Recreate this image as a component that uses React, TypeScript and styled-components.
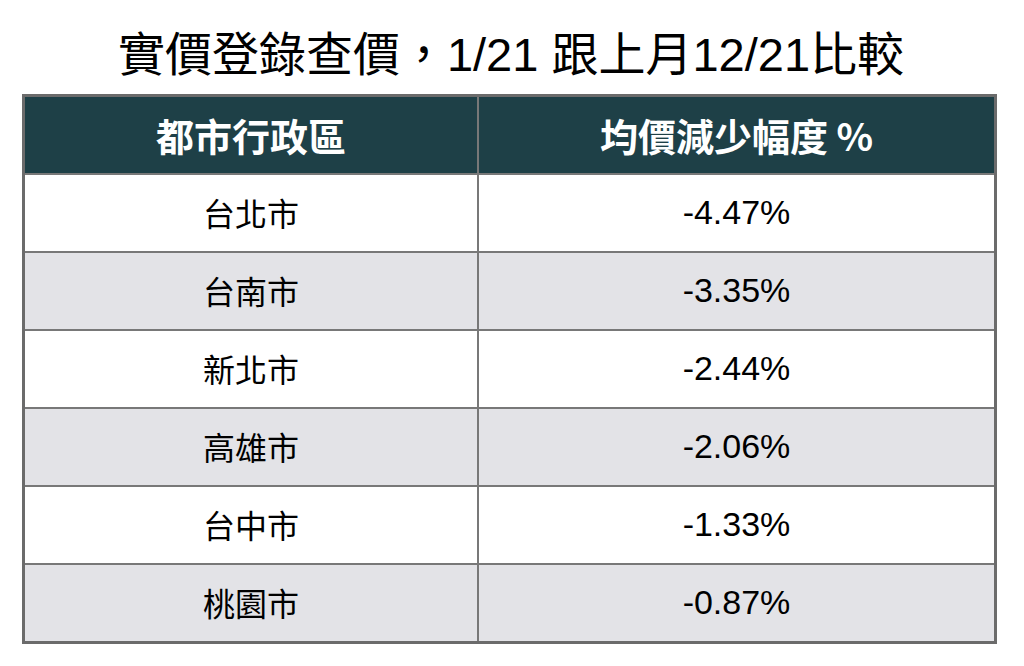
import React from "react";
import styled, { createGlobalStyle } from "styled-components";

const Global = createGlobalStyle`
  html, body { margin: 0; padding: 0; background: #ffffff; }
  body { font-family: "Liberation Sans", "Noto Sans CJK TC", sans-serif; }
`;

const Page = styled.div`
  width: 1024px;
  height: 666px;
  display: flex;
  flex-direction: column;
  align-items: center;
  box-sizing: border-box;
`;

const Title = styled.h1`
  margin: 0;
  height: 94px;
  display: flex;
  align-items: center;
  justify-content: center;
  padding-top: 6px;
  box-sizing: border-box;
  font-size: 47px;
  font-weight: 400;
  color: #000;
  font-family: "Liberation Sans", "Noto Sans CJK TC", sans-serif;
  white-space: nowrap;
  transform: translateX(-1px);
`;

const Table = styled.div`
  align-self: flex-start;
  width: 975px;
  margin-left: 22px;
  box-sizing: border-box;
  border: 3px solid #6b6b6b;
  background: #787878;
  display: grid;
  grid-template-columns: 452px 515px;
  grid-auto-rows: 76px;
  gap: 2px;
`;

const HeadCell = styled.div`
  background: #1e4047;
  color: #ffffff;
  display: flex;
  align-items: center;
  justify-content: center;
  font-family: "Noto Sans CJK TC", "Liberation Sans", sans-serif;
  font-weight: 700;
  font-size: 38px;
  padding-bottom: 2px;
`;

const Cell = styled.div<{ $alt: boolean; $num?: boolean }>`
  background: ${(p) => (p.$alt ? "#e3e3e7" : "#ffffff")};
  color: #000;
  display: flex;
  align-items: center;
  justify-content: center;
  font-family: ${(p) =>
    p.$num
      ? `"Liberation Sans", "Noto Sans CJK TC", sans-serif`
      : `"Noto Sans CJK TC", "Liberation Sans", sans-serif`};
  font-size: ${(p) => (p.$num ? "34px" : "32px")};
  font-weight: 400;
  padding-bottom: 2px;
`;

const rows: [string, string][] = [
  ["台北市", "-4.47%"],
  ["台南市", "-3.35%"],
  ["新北市", "-2.44%"],
  ["高雄市", "-2.06%"],
  ["台中市", "-1.33%"],
  ["桃園市", "-0.87%"],
];

export default function App() {
  return (
    <>
      <Global />
      <Page>
        <Title>實價登錄查價，1/21 跟上月12/21比較</Title>
        <Table>
          <HeadCell>都市行政區</HeadCell>
          <HeadCell>均價減少幅度 %</HeadCell>
          {rows.map(([city, val], i) => (
            <React.Fragment key={city}>
              <Cell $alt={i % 2 === 1}>{city}</Cell>
              <Cell $alt={i % 2 === 1} $num>
                {val}
              </Cell>
            </React.Fragment>
          ))}
        </Table>
      </Page>
    </>
  );
}
